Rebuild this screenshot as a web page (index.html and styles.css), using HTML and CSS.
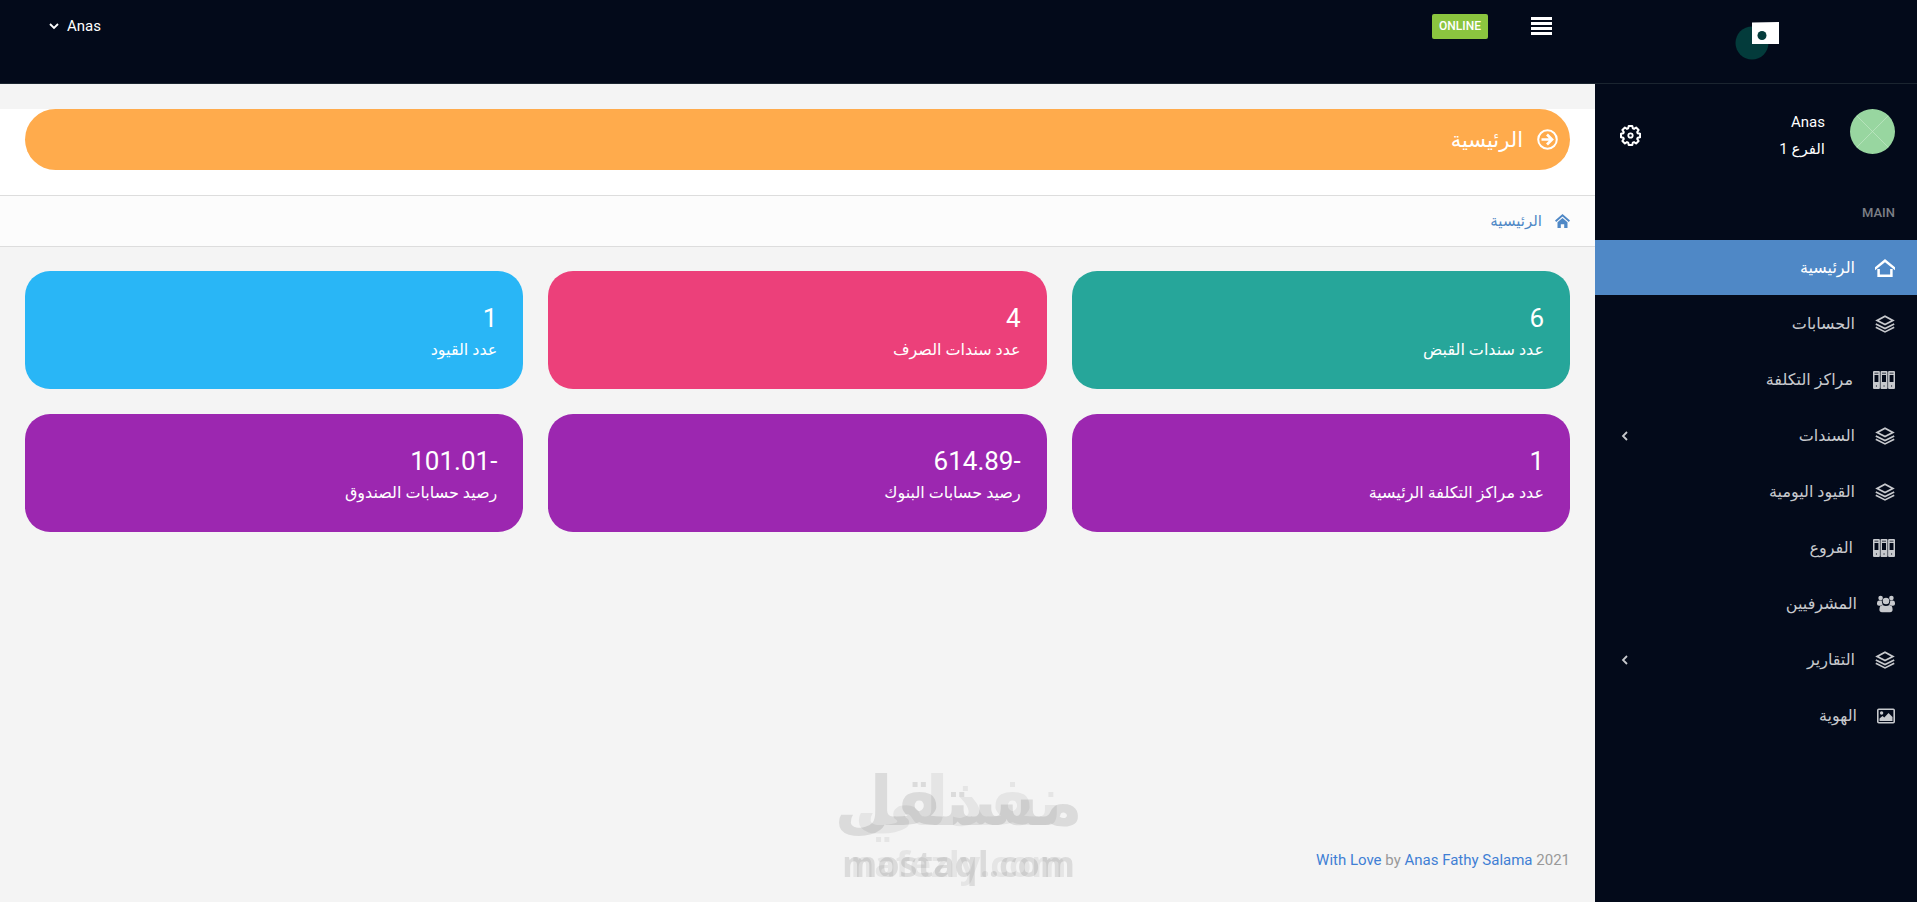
FILE: index.html
```html
<!DOCTYPE html>
<html lang="ar" dir="rtl">
<head>
  <meta charset="UTF-8" />
  <title>الرئيسية</title>
  <meta name="viewport" content="width=device-width, initial-scale=1.0" />
  <link rel="stylesheet" href="styles.css">
</head>
<body>

  <!-- Shared icons -->
  <svg class="sprite" aria-hidden="true">
    <symbol id="i-home" viewBox="0 0 20 18">
      <path d="M10 0 20 8.300V11.300L10 3.200 0 11.300V8.300z" fill="currentColor"/>
      <path d="M3.600 10V16.700H16.400V10" fill="none" stroke="currentColor" stroke-width="2.500"/>
    </symbol>
    <symbol id="i-layers" viewBox="0 0 20 18">
      <path d="M10 .3 19.800 5.400 10 10.500 .2 5.400zM10 2.200 4 5.400 10 8.600 16 5.400z" fill="currentColor" fill-rule="evenodd"/>
      <path d="M.8 9 10 13.600 19.200 9M.8 12.300 10 16.900 19.200 12.300" fill="none" stroke="currentColor" stroke-width="1.700"/>
    </symbol>
    <symbol id="i-binders" viewBox="0 0 22 18">
      <path fill="currentColor" fill-rule="evenodd" d="M0 1q0-1 1-1h4.900q1 0 1 1v16q0 1-1 1H1q-1 0-1-1zM1.500 4v7h3.900V4zM1.500 1.700v.8h3.900v-.8zM2.900 14.500h1.100v1.100H2.900z
        M7.500 1q0-1 1-1h5q1 0 1 1v16q0 1-1 1h-5q-1 0-1-1zM9 4v7h4V4zM9 1.700v.8h4v-.8zM10.500 14.500h1.100v1.100h-1.100z
        M15.100 1q0-1 1-1H21q1 0 1 1v16q0 1-1 1h-4.900q-1 0-1-1zM16.600 4v7h3.900V4zM16.600 1.700v.8h3.900v-.8zM18 14.500h1.100v1.100H18z"/>
    </symbol>
    <symbol id="i-users" viewBox="0 0 18 17">
      <g fill="currentColor">
        <circle cx="3.600" cy="2.500" r="2.300"/>
        <circle cx="14.400" cy="2.500" r="2.300"/>
        <circle cx="9" cy="5.500" r="3.300"/>
        <path d="M0 7.500Q0 5 2 5h2.800q-.2 2.500 1.200 4-1.500.2-2.500 1.200H2Q0 10.200 0 8.500zM18 7.500Q18 5 16 5h-2.800q.2 2.500-1.200 4 1.500.2 2.500 1.200H16q2 0 2-1.700z"/>
        <path d="M2.400 14q0-4.200 3.200-4.600Q9 11.500 12.400 9.400q3.200.4 3.200 4.600 0 2.800-2.600 2.800H5q-2.600 0-2.600-2.800z"/>
      </g>
    </symbol>
    <symbol id="i-image" viewBox="0 0 18 15">
      <rect x=".8" y=".8" width="16.400" height="13.400" rx="1" fill="none" stroke="currentColor" stroke-width="1.600"/>
      <circle cx="4.600" cy="4.500" r="1.700" fill="currentColor"/>
      <path d="M2.500 12.500V10L5.500 7.500 7.300 9 11.500 4.500 15.500 8.500v4z" fill="currentColor"/>
    </symbol>
    <symbol id="i-chevron" viewBox="0 0 7 10">
      <path d="M6 1 2 5l4 4" fill="none" stroke="currentColor" stroke-width="1.800"/>
    </symbol>
  </svg>

  <header class="navbar">
    <a class="brand" href="#" aria-label="الرئيسية">
      <svg width="44" height="38" viewBox="0 0 44 38">
        <circle cx="17" cy="21" r="16.500" fill="#033b3b"/>
        <path d="M17 .5 44 0v22H17z" fill="#fff"/>
        <circle cx="27" cy="13.500" r="4.500" fill="#033b3b"/>
      </svg>
    </a>
    <div class="navbar-main">
      <button class="menu-toggle" type="button" aria-label="القائمة">
        <svg width="21" height="18" viewBox="0 0 21 18" fill="#fff">
          <path d="M0 0h21v3H0zM0 5h21v3H0zM0 10h21v3H0zM0 15h21v3H0z"/>
        </svg>
      </button>
      <span class="badge">ONLINE</span>
      <button class="user-menu" type="button">
        Anas
        <svg width="10" height="7" viewBox="0 0 10 7"><path d="M1 1l4 4 4-4" fill="none" stroke="#fff" stroke-width="1.800"/></svg>
      </button>
    </div>
  </header>

  <div class="page">
    <aside class="sidebar">
      <div class="profile">
        <svg class="avatar" viewBox="0 0 45 45">
          <circle cx="22.500" cy="22.500" r="22.500" fill="#98d6a0"/>
          <path d="M7 7l31 31M38 7 7 38" stroke="#c3e8c7" stroke-width=".7"/>
        </svg>
        <div class="profile-text">
          <div>Anas</div>
          <div>الفرع 1</div>
        </div>
        <a class="settings" href="#" aria-label="الإعدادات">
          <svg width="21" height="21" viewBox="0 0 21 21" fill="none" stroke="#fff">
            <path stroke-width="2" stroke-linejoin="round" d="M8.700 1h3.600l.5 2.400 1.200.5 2.100-1.400 2.500 2.500-1.400 2.100.5 1.200 2.400.5v3.400l-2.400.5-.5 1.200 1.400 2.100-2.500 2.500-2.100-1.400-1.200.5-.5 2.400H8.700l-.5-2.400-1.200-.5-2.100 1.400-2.500-2.500 1.400-2.100-.5-1.200L1 12.200V8.800l2.300-.5.5-1.200L2.400 5l2.500-2.500L7 3.900l1.200-.5z"/>
            <circle cx="10.500" cy="10.500" r="2.200" stroke-width="1.800"/>
          </svg>
        </a>
      </div>

      <div class="nav-title">MAIN</div>
      <nav class="nav">
        <a class="active" href="#"><svg class="icon"><use href="#i-home"/></svg>الرئيسية</a>
        <a href="#"><svg class="icon"><use href="#i-layers"/></svg>الحسابات</a>
        <a href="#"><svg class="icon icon-wide"><use href="#i-binders"/></svg>مراكز التكلفة</a>
        <a href="#"><svg class="icon"><use href="#i-layers"/></svg>السندات<svg class="arrow"><use href="#i-chevron"/></svg></a>
        <a href="#"><svg class="icon"><use href="#i-layers"/></svg>القيود اليومية</a>
        <a href="#"><svg class="icon icon-wide"><use href="#i-binders"/></svg>الفروع</a>
        <a href="#"><svg class="icon icon-small"><use href="#i-users"/></svg>المشرفيين</a>
        <a href="#"><svg class="icon"><use href="#i-layers"/></svg>التقارير<svg class="arrow"><use href="#i-chevron"/></svg></a>
        <a href="#"><svg class="icon icon-small"><use href="#i-image"/></svg>الهوية</a>
      </nav>
    </aside>

    <main class="content">
      <div class="page-header">
        <h1>
          <svg width="21" height="21" viewBox="0 0 21 21" fill="none" stroke="#fff">
            <circle cx="10.500" cy="10.500" r="9.300" stroke-width="2"/>
            <path d="M4.500 10.500h10M10 5.500l5 5-5 5" stroke-width="2.700"/>
          </svg>
          الرئيسية
        </h1>
      </div>
      <div class="breadcrumb">
        <a href="#">
          <svg width="15" height="14" viewBox="0 0 15 14">
            <path d="M.6 7.300 7.500 1.300l6.900 6" fill="none" stroke="currentColor" stroke-width="1.900"/>
            <path d="M2.500 8.300 7.500 4l5 4.300V14H9.200v-3.700H5.800V14H2.500z" fill="currentColor"/>
          </svg>
          الرئيسية
        </a>
      </div>

      <div class="cards">
        <div class="card teal"><h3>6</h3><p>عدد سندات القبض</p></div>
        <div class="card pink"><h3>4</h3><p>عدد سندات الصرف</p></div>
        <div class="card blue"><h3>1</h3><p>عدد القيود</p></div>
        <div class="card purple"><h3>1</h3><p>عدد مراكز التكلفة الرئيسية</p></div>
        <div class="card purple"><h3>-614.89</h3><p>رصيد حسابات البنوك</p></div>
        <div class="card purple"><h3>-101.01</h3><p>رصيد حسابات الصندوق</p></div>
      </div>

      <footer dir="ltr">
        <a href="#">With Love</a> by <a href="#">Anas Fathy Salama</a> 2021
      </footer>
    </main>
  </div>

  <!-- Watermark -->
  <div class="watermark" aria-hidden="true">
    <div class="mark light"><span class="mark-ar">نفذلي</span><span class="mark-en">nafezly.com</span></div>
    <div class="mark"><span class="mark-ar">مستقل</span><span class="mark-en">mostaql.com</span></div>
  </div>

</body>
</html>
```
FILE: styles.css
```css
* {
  box-sizing: border-box;
}
body {
  display: flex;
  flex-direction: column;
  min-height: 100vh;
  margin: 0;
  background: #f4f4f4;
  color: #fff;
  font-family: Roboto, "DejaVu Sans", sans-serif;
  font-size: 15px;
  line-height: 24px;
}
a {
  color: inherit;
  text-decoration: none;
}
button {
  padding: 0;
  border: none;
  background: none;
  color: inherit;
  font: inherit;
  cursor: pointer;
}
svg {
  flex: none;
}
.sprite {
  position: absolute;
  width: 0;
  height: 0;
}

/* Top bar */
.navbar {
  display: flex;
  height: 84px;
  background: #030a1a;
  border-bottom: 1px solid #1b2530;
}
.brand {
  display: flex;
  justify-content: center;
  width: 322px;
  padding: 22px 0 0 2px;
}
.navbar-main {
  display: flex;
  flex: 1;
  align-items: flex-start;
  padding: 14px 43px 0 49px;
}
.menu-toggle,
.user-menu {
  display: flex;
  align-items: center;
  height: 24px;
}
.badge {
  margin-right: 43px;
  padding: 0 7px;
  border-radius: 2px;
  background: #8bc53f;
  font-size: 12px;
  font-weight: 500;
  line-height: 25px;
}
.user-menu {
  gap: 8px;
  margin-right: auto;
}

/* Sidebar */
.page {
  display: flex;
  flex: 1;
}
.sidebar {
  width: 322px;
  background: #030a1a;
}
.profile {
  display: flex;
  padding: 25px 22px 0 25px;
}
.avatar {
  width: 45px;
  height: 45px;
}
.profile-text {
  margin-right: 25px;
  line-height: 27px;
}
.settings {
  margin-right: auto;
  padding-top: 16px;
}
.nav-title {
  padding: 38px 22px 15px;
  color: #7c7f86;
  font-size: 13px;
  font-weight: 500;
}
.nav {
  display: flex;
  flex-direction: column;
  gap: 1px;
  font-size: 16px;
}
.nav a {
  display: flex;
  align-items: center;
  height: 55px;
  padding: 0 22px 0 26px;
  color: #c7c9cd;
}
.nav a.active {
  background: #4f88c6;
  color: #fff;
}
.icon {
  width: 20px;
  height: 18px;
  margin-left: 20px;
}
.icon-wide {
  width: 22px;
}
.icon-small {
  width: 18px;
}
.arrow {
  width: 7px;
  height: 10px;
  margin-right: auto;
}

/* Content */
.content {
  display: flex;
  flex: 1;
  flex-direction: column;
}
.page-header {
  margin-top: 25px;
  padding: 0 25px 25px;
  background: #fff;
}
.page-header h1 {
  display: flex;
  align-items: center;
  gap: 14px;
  height: 61px;
  margin: 0;
  padding: 0 12px;
  border-radius: 31px;
  background: #ffab4c;
  font-size: 21px;
  font-weight: normal;
}
.breadcrumb {
  display: flex;
  align-items: center;
  height: 52px;
  padding: 0 25px;
  border: solid #ddd;
  border-width: 1px 0;
  background: #fcfcfc;
  color: #4f88c6;
}
.breadcrumb a {
  display: flex;
  align-items: center;
  gap: 13px;
}
.cards {
  display: grid;
  grid-template-columns: repeat(3, 1fr);
  gap: 25px;
  padding: 24px 25px;
}
.card {
  padding: 27px 26px;
  border-radius: 25px;
}
.card h3 {
  margin: 0;
  font-size: 26px;
  font-weight: normal;
  line-height: 40px;
}
.card p {
  margin: 0;
  font-size: 16px;
  line-height: 24px;
}
.teal { background: #26a69a; }
.pink { background: #ec407a; }
.blue { background: #29b6f6; }
.purple { background: #9c27b0; }

footer {
  margin-top: auto;
  padding: 0 25px 30px;
  color: #999;
  text-align: right;
}
footer a {
  color: #3f7fd4;
}

/* Watermark over the page */
.watermark {
  position: fixed;
  right: 0;
  bottom: 18px;
  left: 0;
  display: grid;
  justify-items: center;
  pointer-events: none;
}
.mark {
  display: flex;
  grid-area: 1 / 1;
  flex-direction: column;
  align-items: center;
  color: #000;
  font-weight: bold;
  opacity: 0.1;
}
.mark.light {
  opacity: 0.06;
}
.mark-ar {
  font-family: "DejaVu Sans", sans-serif;
  font-size: 68px;
  line-height: 84px;
}
.mark-en {
  font-family: "Open Sans", sans-serif;
  font-size: 36px;
  line-height: 40px;
}
```
